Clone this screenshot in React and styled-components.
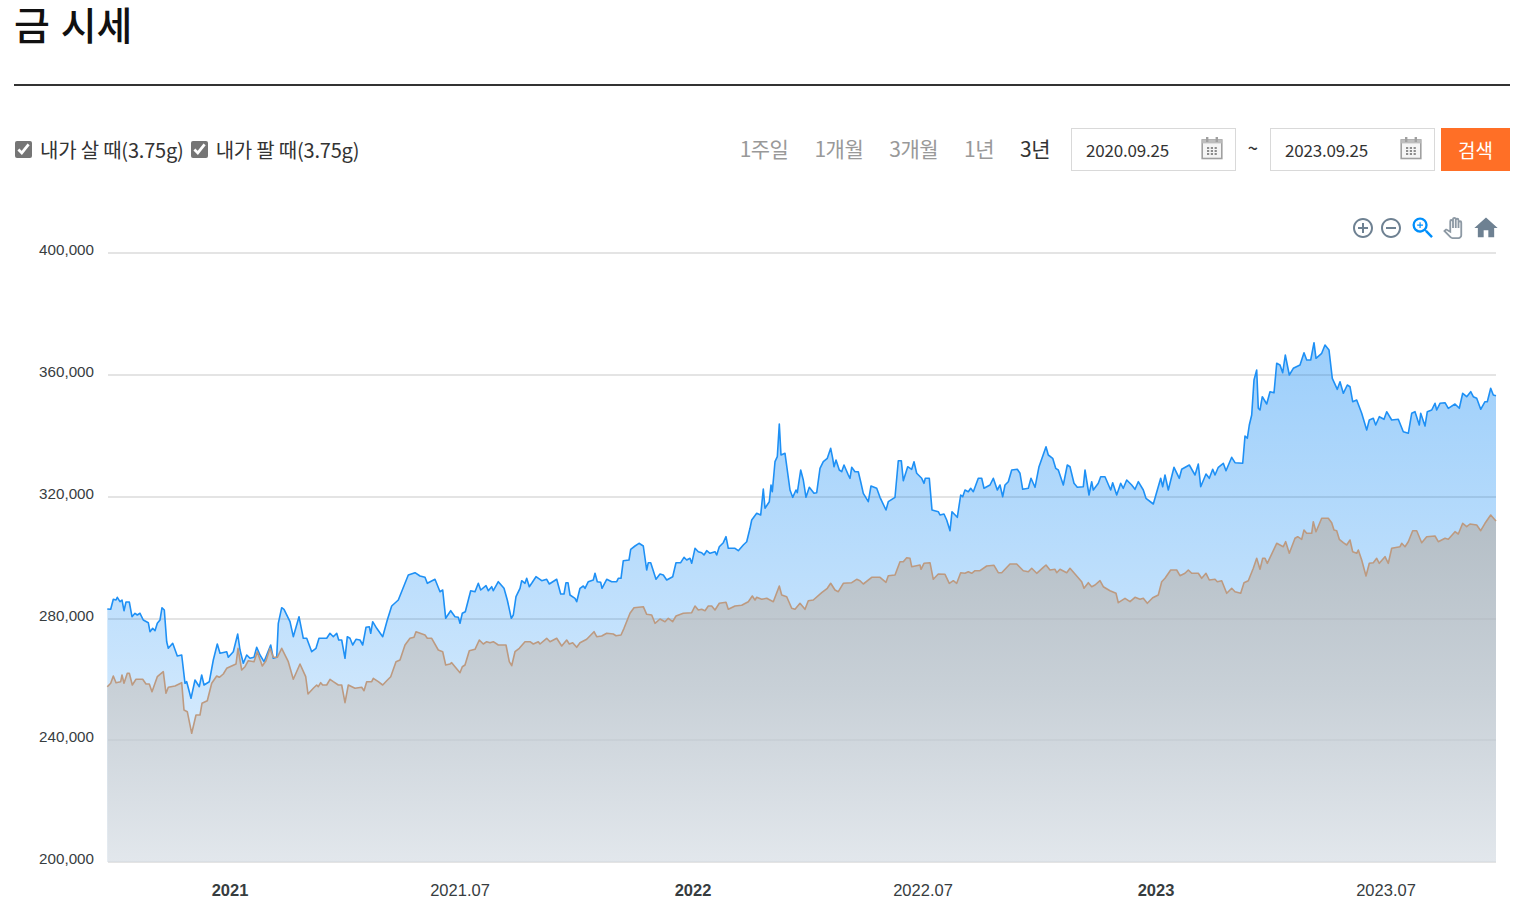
import React from "react";
import styled, { createGlobalStyle } from "styled-components";
import {
  MdAddCircleOutline,
  MdRemoveCircleOutline,
  MdZoomIn,
  MdOutlinePanTool,
  MdHome,
} from "react-icons/md";

const FONT = `"Noto Sans CJK KR", "Noto Sans", sans-serif`;

const GlobalStyle = createGlobalStyle`
  html, body {
    margin: 0;
    padding: 0;
    background: #fff;
    overflow: hidden;
  }
  body {
    font-family: ${FONT};
    color: #333;
  }
`;

// chart traces, read off in groups: [originX, originY, x0, y0, x1, y1, ...] at 3x
const BLUE = [
  [100, 570, [22,117,32,118,40,88,48,90,52,82,60,95,66,90,72,122,78,96,88,96,96,140,105,130,112,135,120,130,130,150,145,158,150,185,158,175,165,182,172,160,180,150,186,113,193,120,200,215,205,235,218,220,232,258,245,255,255,340,260,335,273,385,285,330,298,350,305,315,312,345,328,335,340,270,352,222,360,250,380,245,385,262,400,245,413,192,420,240,430,280,440,255,450,265,462,262,470,232,480,255,492,275,512,225,520,265,530,262,535,160,545,113,552,118,570,155,580,200,597,140,610,205,620,205,635,245,648,235,657,205,680,205,690,190,700,200,710,190,716,210,725,210,735,265,742,200,750,205,758,225,768,208,780,210,788,225,798,172,808,170,812,190,818,155,830,175,848,200,862,150,875,108,895,90,915,40,925,15,945,8,960,18,975,22,982,40,1005,28,1020,65,1028,60,1037,145,1050,125]],
  [430, 520, [62,272,75,290,85,292,90,310,97,280,106,275,122,212,135,215,145,190,152,210,168,197,175,212,185,200,190,212,205,185,222,205,232,240,244,295,250,285,258,230,270,205,275,182,285,190,290,175,298,200,305,190,318,170,335,182,350,178,358,192,380,178,392,222,402,222,408,188,414,188,420,225,435,235,440,245,450,205,460,198,465,205,475,185,490,180,495,160,502,185,512,187,516,205,530,178,545,185,560,185,565,175,573,175,580,122,597,120,602,88,615,78,627,70,640,78,650,150,655,128,662,128,678,178,690,162,700,165,710,180,728,170,738,128,752,128,762,112,770,120,780,115,785,130,795,85,805,95,815,98,822,105,830,92,840,100,855,95,860,105,868,80,880,68,888,50,895,85,915,85,925,92,940,75,950,65,960,25,965,0]],
  [740, 410, [50,310,62,315,70,237,75,295,88,275,93,225,97,245,105,155,112,140,118,42,123,135,135,130,150,240,158,262,168,240,172,248,182,180,190,210,198,262,208,232,222,250,230,248,240,175,250,155,262,145,272,115,278,145,282,170,288,150,298,180,305,185,312,165,325,195,330,205,335,172,345,185,355,185,362,215,370,250,385,275,393,228,410,235,420,262,438,300,445,275,465,262,475,152,484,152,490,212,503,170,515,178,522,155,530,190,545,205,552,220,556,205,568,205,576,300,595,305,600,315,612,312,620,330,630,362,636,305,652,322,662,255,668,260,675,240,685,245,692,235,700,245,715,205,725,205,732,235,750,225,760,205,772,240,780,225,788,260,795,225,805,215,815,180,832,178,840,190,848,238,865,235,873,205,885,232,897,170,918,110,925,135,938,145,947,175,955,180,970,225,982,165,990,170,1002,220,1012,232,1030,230,1035,180,1047,255,1055,215,1060,240,1075,220,1082,200,1095,200,1112,240,1118,218,1130,255,1142,220,1150,235,1160,210,1175,225,1185,238,1195,215]],
  [1130, 330, [40,480,48,505,70,522,92,445,98,470,105,435,115,480,132,412,148,445,155,418,178,405,195,435,205,402,212,470,228,432,238,445,248,418,255,435,265,412,280,400,288,422,305,382,315,398,338,400,345,318,352,325,358,285,365,255,372,150,380,120,385,235,390,240,397,200,410,222,420,185,432,188,440,100,450,105,458,128,466,75,478,135,490,115,510,105,522,68,530,90,542,90,552,38,558,85,575,70,585,45,597,60,607,145,622,178,630,155,640,190,652,165,660,170,668,215,680,210,695,250,710,300,718,270,730,265,737,285,748,260,762,268,770,245,785,270,805,268,820,305,835,310,845,250,855,245,868,285,872,250,885,288,892,245,905,240,915,220,920,240,930,220,945,218,955,235,975,222,988,235,998,190,1010,200,1022,185,1030,200,1040,205,1052,238,1065,215,1072,215,1082,175,1090,195,1098,197]],
];

const GOLD = [
  [100, 570, [22,350,32,340,40,318,48,338,62,335,66,315,72,340,82,310,88,310,97,345,108,328,128,328,138,342,148,342,156,365,172,320,190,305,198,370,205,352,225,348,245,338,252,420,262,425,275,490,288,435,300,435,306,400,322,392,335,340,350,318,358,322,370,312,380,295,408,282,414,235,425,300,435,290,445,272,462,275,472,245,487,288,498,272,510,235,520,262,532,262,545,235,565,275,580,328,600,282,617,320,624,372,640,355,650,345,655,350,662,338,668,345,680,345,690,328,700,335,715,345,725,345,735,398,745,345,765,355,785,352,792,362,800,335,815,335,820,325,835,335,848,345,860,332,872,320,888,275,900,270,915,225,930,205,942,202,948,185,975,195,982,205,995,205,1015,240,1028,245,1037,285,1050,282]],
  [430, 520, [65,428,75,440,90,458,97,440,105,435,118,392,135,388,148,360,160,372,170,365,180,368,190,365,205,375,228,375,238,425,245,437,255,395,268,385,285,365,300,365,310,372,325,365,330,372,350,355,360,365,380,355,395,378,410,360,418,372,428,368,440,382,450,368,470,358,492,335,500,350,515,348,530,340,550,342,558,347,573,345,582,325,600,280,612,263,640,260,650,283,665,285,675,310,690,297,705,305,715,295,728,305,738,288,760,280,785,278,795,258,805,270,815,268,825,272,835,258,845,258,855,270,868,250,888,247,895,268,915,258,935,256,955,245,967,228,975,240,980,232,995,238,1010,235]],
  [740, 410, [100,575,118,528,125,555,140,560,155,595,165,598,180,580,195,598,205,572,220,570,245,548,262,535,272,520,285,540,295,545,310,520,335,518,350,508,360,512,370,522,395,502,420,502,438,517,445,497,465,495,480,455,490,455,500,443,510,445,515,470,540,465,543,478,552,460,570,458,580,508,595,492,615,493,628,520,640,512,650,520,662,488,675,490,685,485,695,490,705,482,720,482,740,468,762,466,775,488,785,488,810,462,830,462,850,482,865,485,875,475,890,490,910,472,918,465,930,480,945,478,950,488,960,478,980,488,990,475,1025,515,1032,535,1045,518,1055,530,1065,525,1080,512,1090,530,1110,542,1128,550,1135,578,1155,565,1170,575,1185,562]],
  [1130, 330, [30,808,40,805,52,820,68,803,85,795,95,755,105,745,122,720,140,720,150,737,165,730,175,720,185,730,205,730,215,745,228,730,238,750,255,748,262,755,275,752,290,790,305,775,315,785,332,790,342,758,355,752,370,715,380,685,390,718,398,685,405,685,412,700,440,640,460,650,467,635,478,670,495,625,503,620,515,628,522,600,530,610,545,610,550,575,558,605,575,565,595,565,605,578,612,600,620,602,628,628,640,638,650,645,660,630,668,665,680,670,685,660,695,690,708,738,718,700,730,698,740,685,748,700,765,680,775,700,785,655,810,650,815,640,825,650,835,635,848,602,860,602,875,638,890,620,915,618,925,635,945,625,955,628,975,605,985,612,998,580,1010,590,1020,582,1040,585,1052,602,1065,580,1082,555,1098,573]],
];

const BASE_Y = 862;

const toPoints = (groups) => {
  const pts = [];
  groups.forEach(([ox, oy, raw]) => {
    for (let i = 0; i < raw.length; i += 2) {
      pts.push([ox + raw[i] / 3, oy + raw[i + 1] / 3]);
    }
  });
  return pts;
};

const linePath = (pts) =>
  pts.map(([x, y], i) => `${i ? "L" : "M"}${x.toFixed(1)} ${y.toFixed(1)}`).join("");

const areaPath = (pts) =>
  `${linePath(pts)}L${pts[pts.length - 1][0].toFixed(1)} ${BASE_Y}L${pts[0][0].toFixed(1)} ${BASE_Y}Z`;

const GRID = [
  { y: 253, label: "400,000" },
  { y: 375, label: "360,000" },
  { y: 497, label: "320,000" },
  { y: 619, label: "280,000" },
  { y: 740, label: "240,000" },
  { y: 862, label: "200,000" },
];

const MONTHS = [
  { x: 230, label: "2021", bold: true },
  { x: 460, label: "2021.07" },
  { x: 693, label: "2022", bold: true },
  { x: 923, label: "2022.07" },
  { x: 1156, label: "2023", bold: true },
  { x: 1386, label: "2023.07" },
];

const PERIODS = ["1주일", "1개월", "3개월", "1년", "3년"];

const CalendarIcon = () => (
  <CalendarSvg width="22" height="24" viewBox="0 0 22 24" fill="none">
    <rect x="1.2" y="4" width="19.6" height="18.5" fill="#f5f5f5" stroke="#a0a0a0" strokeWidth="1.6" />
    <rect x="1.2" y="4" width="19.6" height="3.4" fill="#bdbdbd" />
    <rect x="5" y="1" width="2.4" height="5" fill="#a0a0a0" />
    <rect x="14.6" y="1" width="2.4" height="5" fill="#a0a0a0" />
    <g fill="#8c8c8c">
      {[6, 9.8, 13.6].map((x) =>
        [11, 14, 17].map((y) => <rect key={`${x}-${y}`} x={x} y={y} width="2.2" height="2" />)
      )}
    </g>
  </CalendarSvg>
);

const App = () => {
  const blue = toPoints(BLUE);
  const gold = toPoints(GOLD);

  return (
    <Page>
      <GlobalStyle />
      <Title>금 시세</Title>
      <Toolbar>
        <CheckGroup>
          <CheckLabel>
            <input type="checkbox" defaultChecked />
            내가 살 때(3.75g)
          </CheckLabel>
          <CheckLabel>
            <input type="checkbox" defaultChecked />
            내가 팔 때(3.75g)
          </CheckLabel>
        </CheckGroup>
        <Filters>
          <Periods>
            {PERIODS.map((p) => (
              <PeriodButton key={p} $active={p === "3년"}>
                {p}
              </PeriodButton>
            ))}
          </Periods>
          <DateBox>
            <span>2020.09.25</span>
            <CalendarIcon />
          </DateBox>
          <Tilde>~</Tilde>
          <DateBox>
            <span>2023.09.25</span>
            <CalendarIcon />
          </DateBox>
          <SearchButton>검색</SearchButton>
        </Filters>
      </Toolbar>
      <ChartWrap>
        <ChartTools>
          <ToolSlot $size={24}>
            <MdAddCircleOutline />
          </ToolSlot>
          <ToolSlot $size={24} $gap={4}>
            <MdRemoveCircleOutline />
          </ToolSlot>
          <ToolSlot $size={28} $gap={6} $color="#008ffb">
            <MdZoomIn />
          </ToolSlot>
          <ToolSlot $size={22} $gap={5} $color="#8d99a4">
            <MdOutlinePanTool />
          </ToolSlot>
          <ToolSlot $size={28} $gap={8}>
            <MdHome />
          </ToolSlot>
        </ChartTools>
        <Chart viewBox="0 190 1519 724">
          <defs>
            <linearGradient id="blueFill" gradientUnits="userSpaceOnUse" x1="0" y1="340" x2="0" y2="862">
              <stop offset="0" stopColor="#1e90f5" stopOpacity="0.44" />
              <stop offset="0.6" stopColor="#1e90f5" stopOpacity="0.25" />
              <stop offset="1" stopColor="#1e90f5" stopOpacity="0.1" />
            </linearGradient>
            <linearGradient id="goldFill" gradientUnits="userSpaceOnUse" x1="0" y1="515" x2="0" y2="862">
              <stop offset="0" stopColor="#b4bec6" />
              <stop offset="0.5" stopColor="#c8d0d7" />
              <stop offset="1" stopColor="#e2e7ec" />
            </linearGradient>
          </defs>
          {GRID.map((g) => (
            <GridLine key={g.y} x1="108" x2="1496" y1={g.y} y2={g.y} />
          ))}
          <path d={areaPath(blue)} fill="url(#blueFill)" />
          <path d={areaPath(gold)} fill="url(#goldFill)" />
          {GRID.map((g) => (
            <g key={g.y}>
              <GridLine x1="108" x2="1496" y1={g.y} y2={g.y} $over />
              <AxisText x="94" y={g.y + 1.7} textAnchor="end">
                {g.label}
              </AxisText>
            </g>
          ))}
          <path d={linePath(blue)} fill="none" stroke="#1e90f5" strokeWidth="1.6" strokeLinejoin="round" />
          <path d={linePath(gold)} fill="none" stroke="#bd9a80" strokeWidth="1.6" strokeLinejoin="round" />
          {MONTHS.map((m) => (
            <AxisText key={m.x} x={m.x} y="895.5" textAnchor="middle" $size={16.5} $bold={m.bold}>
              {m.label}
            </AxisText>
          ))}
        </Chart>
      </ChartWrap>
    </Page>
  );
};

export default App;

// #######################################
// CSS
// #######################################

const Page = styled.div`
  width: 1519px;
  height: 914px;
  overflow: hidden;
`;

const Title = styled.h1`
  margin: 0 9px 0 14px;
  height: 84px;
  border-bottom: 2px solid #333;
  font-family: "Liberation Sans", "Noto Sans CJK KR", sans-serif;
  font-size: 39px;
  font-weight: 500;
  line-height: 53px;
  color: #111;
`;

const Toolbar = styled.div`
  display: flex;
  justify-content: space-between;
  align-items: center;
  margin: 42px 9px 0 14px;
  height: 43px;
`;

const CheckGroup = styled.div`
  display: flex;
  align-items: center;
  gap: 6px;
`;

const CheckLabel = styled.label`
  display: flex;
  align-items: center;
  gap: 8px;
  font-size: 20px;
  letter-spacing: -0.2px;
  color: #333;

  input {
    margin: 0 0 0 1px;
    width: 17px;
    height: 17px;
    accent-color: #757575;
  }
`;

const Filters = styled.div`
  display: flex;
  align-items: center;
`;

const Periods = styled.div`
  display: flex;
  gap: 26px;
  margin-right: 21px;
  padding-bottom: 4px;
`;

const PeriodButton = styled.span`
  font-size: 21px;
  letter-spacing: -0.5px;
  color: ${(p) => (p.$active ? "#333" : "#999")};
`;

const DateBox = styled.div`
  display: flex;
  align-items: center;
  justify-content: space-between;
  box-sizing: border-box;
  width: 165px;
  height: 43px;
  padding: 0 12px 0 14px;
  border: 1px solid #d9d9d9;
  font-size: 17px;
  letter-spacing: -0.2px;
  color: #333;
`;

const CalendarSvg = styled.svg`
  margin-bottom: 3px;
`;

const Tilde = styled.span`
  width: 34px;
  padding-bottom: 5px;
  text-align: center;
  font-size: 18px;
  font-weight: 500;
  color: #333;
`;

const SearchButton = styled.div`
  display: flex;
  align-items: center;
  justify-content: center;
  width: 69px;
  height: 43px;
  margin-left: 6px;
  background: #ff6f26;
  color: #fff;
  font-size: 19px;
`;

const ChartWrap = styled.div`
  position: relative;
  margin-top: 19px;
`;

const Chart = styled.svg`
  display: block;
  width: 1519px;
  height: 724px;
`;

const ChartTools = styled.div`
  position: absolute;
  top: 24px;
  left: 1351px;
  display: flex;
  align-items: center;
`;

const ToolSlot = styled.span`
  display: block;
  width: ${(p) => p.$size}px;
  height: ${(p) => p.$size}px;
  margin-left: ${(p) => p.$gap || 0}px;
  color: ${(p) => p.$color || "#6e8192"};

  svg {
    display: block;
    width: 100%;
    height: 100%;
  }
`;

const GridLine = styled.line`
  stroke: ${(p) => (p.$over ? "rgba(0, 0, 0, 0.045)" : "#e6e6e6")};
  stroke-width: 1.5;
`;

const AxisText = styled.text`
  font-family: "Liberation Sans", Arial, sans-serif;
  font-size: ${(p) => p.$size || 15.2}px;
  font-weight: ${(p) => (p.$bold ? 700 : 400)};
  fill: #373d3f;
`;
